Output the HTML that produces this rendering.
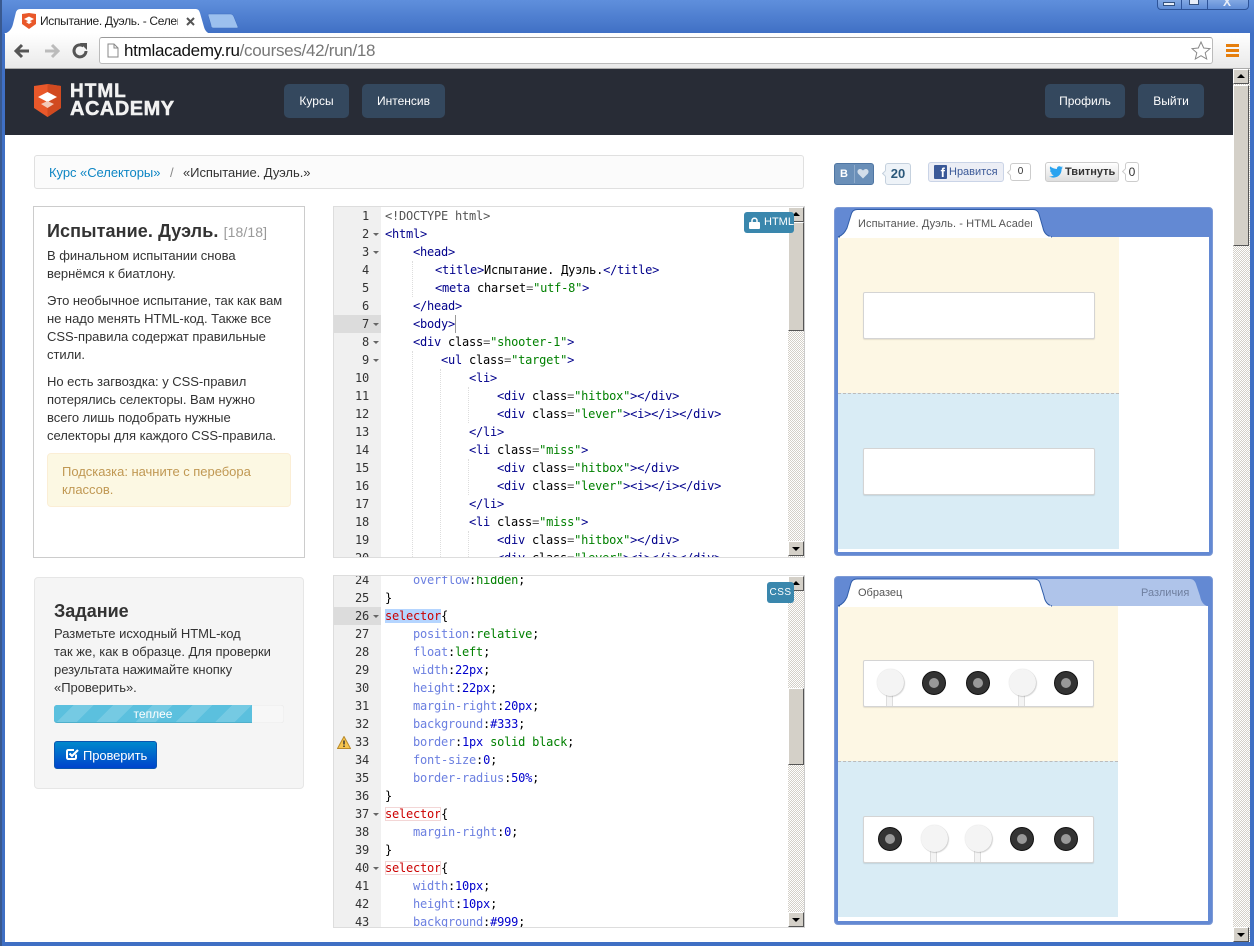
<!DOCTYPE html>
<html><head><meta charset="utf-8"><style>
*{box-sizing:border-box}
html,body{margin:0;padding:0;width:1254px;height:946px;overflow:hidden;background:#fff;font-family:"Liberation Sans",sans-serif;color:#333}
.a{position:absolute}
.t{position:absolute;white-space:nowrap}
.navb{position:absolute;top:84px;height:34px;background:#34485e;border-radius:5px;color:#fff;font-size:12px;line-height:34px;text-align:center}
.p{position:absolute;font-size:13px;line-height:18px;left:47px;color:#333;white-space:nowrap;letter-spacing:-.03px}
.ed{position:absolute;left:333px;width:472px;background:#fff;overflow:hidden;border:1px solid #ddd;border-right:1px solid #ccc}
.gut{position:absolute;left:0;top:0;width:47px;height:100%;background:#f0f0f0}
.n{position:absolute;left:0;width:35px;height:18px;text-align:right;font:12px/18px "DejaVu Sans Mono",monospace;color:#333;letter-spacing:-.22px}
.n.act{width:47px;padding-right:12px;background:#dcdcdc}
.fd{position:absolute;left:39px;width:0;height:0;border:3px solid transparent;border-top:3px solid #666;border-bottom:0}
.l{position:absolute;white-space:pre;height:18px;font:12px/18px "DejaVu Sans Mono",monospace;letter-spacing:-.22px;color:#000}
.g{color:#555}.b{color:#00008b}.s{color:#008000}.c{color:#6b7fe0}.v{color:#008000}.u{color:#0000cd}.r{color:#c00}
.sel{background:#b5d5ff}.bx{outline:1px solid #f3d6d6;outline-offset:-1px}
.dt{position:absolute;border-left:1px dotted #ddd}
.sb{position:absolute;width:17px;background-color:#e8e6e1;background-image:linear-gradient(45deg,#d4d0c8 25%,transparent 25%,transparent 75%,#d4d0c8 75%),linear-gradient(45deg,#d4d0c8 25%,#fff 25%,#fff 75%,#d4d0c8 75%);background-size:2px 2px;background-position:0 0,1px 1px}
.sbb{position:absolute;left:0;width:16px;height:15px;background:#d4d0c8;border:1px solid;border-color:#fff #555 #555 #fff}
.sbt{position:absolute;left:0;width:16px;background:#d4d0c8;border:1px solid;border-color:#fff #555 #555 #fff}
.up{position:absolute;left:3px;top:4px;width:0;height:0;border:4px solid transparent;border-bottom:4px solid #000;border-top:0}
.dn{position:absolute;left:3px;top:5px;width:0;height:0;border:4px solid transparent;border-top:4px solid #000;border-bottom:0}
.badge{position:absolute;background:#3a87ad;color:#fff;border-radius:3px;font-size:10px;text-align:center}
.pv{position:absolute;left:834px;width:379px;background:#6389d3;border-radius:4px;border:1px solid #7d9ad6}
.box{position:absolute;background:#fff;border-radius:2px;border:1px solid rgba(0,0,0,.17);box-shadow:0 1px 1px rgba(0,0,0,.1)}
.box>*{margin:-1px 0 0 -1px}
.dk{position:absolute;width:24px;height:24px;border-radius:50%;background:#333;border:1px solid #111}
.dk:after{content:"";position:absolute;left:6px;top:6px;width:10px;height:10px;border-radius:50%;background:#999}
.lt{position:absolute;width:27px;height:27px;border-radius:50%;background:#f4f4f4;box-shadow:1px 1px 1px rgba(0,0,0,.15),0 0 1px rgba(0,0,0,.2)}
.st{position:absolute;width:7px;background:#f4f4f4;border:1px solid #ddd;border-top:0;border-bottom:0}
.soc{position:absolute;border-radius:3px;font-size:11px;white-space:nowrap}
.nt{position:absolute;width:5px;height:5px;background:#fff;transform:rotate(45deg);border-left:1px solid #ccc;border-bottom:1px solid #ccc}
</style></head><body>

<!-- window chrome -->
<div class="a" style="left:0;top:0;width:1254px;height:946px;background:linear-gradient(#5f8fdc,#3f6fc4 34px,#3f6fc4)"></div>
<div class="a" style="left:0;top:0;width:2px;height:946px;background:#39598f"></div>
<div class="a" style="left:1157px;top:-4px;width:92px;height:14px;border:1px solid #2d5398;border-radius:4px;background:linear-gradient(#8fb2e8,#5f8cd6)"></div>
<div class="a" style="left:1181px;top:0;width:1px;height:9px;background:#2d5398"></div>
<div class="a" style="left:1207px;top:0;width:1px;height:9px;background:#2d5398"></div>
<div class="a" style="left:1163px;top:2px;width:12px;height:4px;background:#e8eef8;border:1px solid #33517f"></div>
<div class="a" style="left:1189px;top:-1px;width:10px;height:6px;background:#e8eef8;border:1px solid #33517f"></div>
<div class="t" style="left:1223px;top:-5px;font:bold 12px 'Liberation Sans';color:#e8eef8">X</div>

<!-- tab strip -->
<svg class="a" style="left:0;top:0" width="260" height="36">
<path d="M208 15C208 14 209 14 210 14H230C232 14 233 15 234 17L238 27C238 28 237 28 236 28H214C212 28 211 27 211 25Z" fill="#9cc0ee" stroke="#3d6cbf" stroke-width=".5"/>
<path d="M4 34C10 32 12 28 13 24L16 12C17 10 18 9 21 9H195C198 9 199 10 200 13L204 27C205 30 206 32 210 34Z" fill="#fff"/>
</svg>
<svg class="a" style="left:22px;top:13px" width="14" height="16" viewBox="0 0 14 16"><path d="M0 1L7 0L14 1V11L7 16L0 11Z" fill="#e9582a"/><path d="M2 6L7 3.500L12 6L7 8.500Z M4 9L7 7.800L10 9L7 11Z" fill="#fff"/></svg>
<div class="t" style="left:40px;top:13px;width:138px;overflow:hidden;font-size:12px;line-height:16px;color:#222;letter-spacing:-.32px">Испытание. Дуэль. - Селек</div>
<svg class="a" style="left:186px;top:17px" width="9" height="9"><path d="M1 1L8 8M8 1L1 8" stroke="#555" stroke-width="2"/></svg>

<!-- toolbar -->
<div class="a" style="left:5px;top:33px;width:1245px;height:36px;background:linear-gradient(#fff,#e9e9e9);border-bottom:1px solid #aaa"></div>
<svg class="a" style="left:14px;top:42px" width="76" height="18" viewBox="0 0 76 18">
<path d="M2 9H15M8 3L2 9L8 15" fill="none" stroke="#555" stroke-width="3"/>
<path d="M31 9H44M38 3L44 9L38 15" fill="none" stroke="#bbb" stroke-width="3"/>
<path d="M72 9A6 6 0 1 1 69.500 4" fill="none" stroke="#555" stroke-width="3"/><path d="M66 1H73V8Z" fill="#555"/>
</svg>
<div class="a" style="left:99px;top:37px;width:1114px;height:27px;background:#fff;border:1px solid #bbb;border-top-color:#999;border-radius:3px"></div>
<svg class="a" style="left:107px;top:43px" width="12" height="15"><path d="M1 1H7L11 5V14H1Z" fill="#fff" stroke="#888"/><path d="M7 1V5H11" fill="none" stroke="#888"/></svg>
<div class="t" style="left:124px;top:41px;font-size:17px;line-height:20px;color:#111;letter-spacing:-.29px">htmlacademy.ru<span style="color:#777">/courses/42/run/18</span></div>
<svg class="a" style="left:1191px;top:41px" width="20" height="19"><path d="M10 1L12.700 7L19 7.600L14.200 11.800L15.700 18L10 14.700L4.300 18L5.800 11.800L1 7.600L7.300 7Z" fill="#fff" stroke="#888"/></svg>
<div class="a" style="left:1226px;top:44px;width:13px;height:3px;background:#e67e0c"></div>
<div class="a" style="left:1226px;top:49px;width:13px;height:3px;background:#e67e0c"></div>
<div class="a" style="left:1226px;top:54px;width:13px;height:3px;background:#e67e0c"></div>

<!-- page -->
<div class="a" style="left:5px;top:69px;width:1245px;height:873px;background:#fff"></div>
<div class="a" style="left:5px;top:69px;width:1228px;height:66px;background:#282c36"></div>
<svg class="a" style="left:34px;top:84px" width="27" height="33" viewBox="0 0 27 33"><path d="M0 2L13.500 0L27 2V24L13.500 33L0 24Z" fill="#e9582a"/><path d="M13.500 0L27 2V24L13.500 33Z" fill="#d14a20"/><path d="M4 13L13.500 8L23 13L13.500 18Z" fill="#fff"/><path d="M7 20L13.500 17L20 20L13.500 24Z" fill="#f3c9b8"/></svg>
<div class="t" style="left:70px;top:82px;font-weight:bold;font-size:19px;line-height:20px;color:#f2f2f2;letter-spacing:1px;-webkit-text-stroke:.5px #f2f2f2">HTML</div>
<div class="t" style="left:70px;top:99px;font-weight:bold;font-size:20px;line-height:20px;color:#f2f2f2;letter-spacing:.5px;-webkit-text-stroke:.5px #f2f2f2">ACADEMY</div>
<div class="navb" style="left:284px;width:65px">Курсы</div>
<div class="navb" style="left:362px;width:83px">Интенсив</div>
<div class="navb" style="left:1045px;width:80px">Профиль</div>
<div class="navb" style="left:1138px;width:66px">Выйти</div>

<!-- breadcrumb -->
<div class="a" style="left:34px;top:155px;width:770px;height:34px;background:#fbfbfb;border:1px solid #e0e0e0;border-radius:3px"></div>
<div class="t" style="left:49px;top:165px;font-size:13px;line-height:16px;color:#0e86c4;letter-spacing:-.05px">Курс «Селекторы»</div>
<div class="t" style="left:170px;top:165px;font-size:13px;line-height:16px;color:#888">/</div>
<div class="t" style="left:183px;top:165px;font-size:13px;line-height:16px;color:#333;letter-spacing:-.05px">«Испытание. Дуэль.»</div>

<!-- social -->
<div class="soc" style="left:834px;top:163px;width:40px;height:22px;background:#6a8fb8;border:1px solid #4f76a3;color:#fff;font-weight:bold;line-height:20px;padding-left:5px">В</div>
<div class="a" style="left:854px;top:165px;width:1px;height:18px;background:#8eabcb"></div>
<svg class="a" style="left:857px;top:168px" width="12" height="11"><path d="M6 10.500L1 5.500C-1 2 3-1 6 2.500C9-1 13 2 11 5.500Z" fill="#d3deea"/></svg>
<div class="soc" style="left:885px;top:163px;width:26px;height:22px;background:#eef3f8;border:1px solid #c5d1de;color:#2b587a;font-weight:bold;font-size:13px;line-height:20px;text-align:center">20</div>
<div class="nt" style="left:883px;top:171px;background:#eef3f8;border-color:#c5d1de"></div>
<div class="soc" style="left:928px;top:162px;width:76px;height:20px;background:#eceef5;border:1px solid #cad4e7;color:#3b5998;line-height:18px;padding-left:20px">Нравится</div>
<div class="a" style="left:934px;top:165px;width:13px;height:14px;background:#3b5998;border-radius:1px;color:#fff;font:bold 13px/16px 'Liberation Sans';text-align:right;padding-right:2px;overflow:hidden">f</div>
<div class="soc" style="left:1010px;top:163px;width:21px;height:18px;background:#fff;border:1px solid #ccc;color:#333;font-size:10px;line-height:16px;text-align:center">0</div>
<div class="nt" style="left:1008px;top:170px"></div>
<div class="soc" style="left:1045px;top:162px;width:74px;height:20px;background:linear-gradient(#fff,#dedede);border:1px solid #ccc;color:#333;font-weight:bold;line-height:18px;padding-left:19px">Твитнуть</div>
<svg class="a" style="left:1049px;top:166px" width="14" height="12" viewBox="0 0 14 12"><path d="M14 1.500L12.400 2C13 1.500 13.300 1 13.500.3L12 1C10.500-.5 7.500.5 8 3C5.500 3 3 2 1.300.4C.4 2 1 3.600 2.200 4.500L1 4.200C1 5.700 2 6.800 3.300 7.100H2.100C2.500 8.300 3.500 9 4.800 9.100C3.500 10.200 1.800 10.600 0 10.400C5.500 13.500 12.800 10.500 12.600 3Z" fill="#2aa3ef"/></svg>
<div class="soc" style="left:1125px;top:162px;width:14px;height:20px;background:#fff;border:1px solid #ccc;color:#333;font-size:12px;line-height:18px;text-align:center">0</div>
<div class="nt" style="left:1123px;top:169px"></div>

<!-- description panel -->
<div class="a" style="left:33px;top:206px;width:272px;height:352px;background:#fff;border:1px solid #ccc"></div>
<div class="t" style="left:47px;top:220px;font-size:18px;line-height:22px;font-weight:bold;color:#333;letter-spacing:.1px">Испытание. Дуэль. <span style="font-weight:normal;font-size:14px;color:#999">[18/18]</span></div>
<div class="p" style="top:247px">В финальном испытании снова<br>вернёмся к биатлону.</div>
<div class="p" style="top:292px">Это необычное испытание, так как вам<br>не надо менять HTML-код. Также все<br>CSS-правила содержат правильные<br>стили.</div>
<div class="p" style="top:373px">Но есть загвоздка: у CSS-правил<br>потерялись селекторы. Вам нужно<br>всего лишь подобрать нужные<br>селекторы для каждого CSS-правила.</div>
<div class="a" style="left:47px;top:453px;width:244px;height:54px;background:#fcf8e3;border:1px solid #fbeed5;border-radius:4px"></div>
<div class="p" style="left:62px;top:463px;color:#c09853">Подсказка: начните с перебора<br>классов.</div>

<!-- task panel -->
<div class="a" style="left:34px;top:577px;width:270px;height:212px;background:#f5f5f5;border:1px solid #e6e6e6;border-radius:4px"></div>
<div class="t" style="left:54px;top:601px;font-size:18px;line-height:20px;font-weight:bold;color:#333">Задание</div>
<div class="p" style="left:54px;top:625px">Разметьте исходный HTML-код<br>так же, как в образце. Для проверки<br>результата нажимайте кнопку<br>«Проверить».</div>
<div class="a" style="left:54px;top:705px;width:230px;height:18px;background:#f7f7f7;border-radius:3px;box-shadow:inset 0 0 1px rgba(0,0,0,.15)"></div>
<div class="a" style="left:54px;top:705px;width:198px;height:18px;border-radius:3px 0 0 3px;background-color:#5bc0de;background-image:repeating-linear-gradient(135deg,#5bc0de 0,#5bc0de 14px,#75cae3 14px,#75cae3 28px);border-bottom:1px solid #4fb0cc"></div>
<div class="t" style="left:54px;top:705px;width:198px;text-align:center;font-size:12px;line-height:18px;color:#fff">теплее</div>
<div class="a" style="left:54px;top:741px;width:103px;height:28px;border-radius:3px;background:linear-gradient(#0088cc,#0044cc);border:1px solid #0a56b0"></div>
<svg class="a" style="left:66px;top:748px" width="13" height="13"><path d="M10 6.500V9.500C10 10.500 9.500 11 8.500 11H2.500C1.500 11 1 10.500 1 9.500V3.500C1 2.500 1.500 2 2.500 2H8" fill="none" stroke="#fff" stroke-width="2"/><path d="M3.500 5.500L6 8L12 2" fill="none" stroke="#fff" stroke-width="2.200"/></svg>
<div class="t" style="left:83px;top:747px;font-size:13px;line-height:17px;color:#fff;letter-spacing:-.1px">Проверить</div>

<!-- HTML editor -->
<div class="ed" style="top:206px;height:352px">
<div class="gut"></div>
<div class="n" style="top:0">1</div><div class="n" style="top:18px">2</div><div class="n" style="top:36px">3</div><div class="n" style="top:54px">4</div><div class="n" style="top:72px">5</div><div class="n" style="top:90px">6</div><div class="n act" style="top:108px">7</div><div class="n" style="top:126px">8</div><div class="n" style="top:144px">9</div><div class="n" style="top:162px">10</div><div class="n" style="top:180px">11</div><div class="n" style="top:198px">12</div><div class="n" style="top:216px">13</div><div class="n" style="top:234px">14</div><div class="n" style="top:252px">15</div><div class="n" style="top:270px">16</div><div class="n" style="top:288px">17</div><div class="n" style="top:306px">18</div><div class="n" style="top:324px">19</div><div class="n" style="top:342px">20</div>
<div class="fd" style="top:26px"></div><div class="fd" style="top:44px"></div><div class="fd" style="top:116px"></div><div class="fd" style="top:134px"></div><div class="fd" style="top:152px"></div>
<div class="dt" style="left:78px;top:54px;height:36px"></div>
<div class="dt" style="left:78px;top:144px;height:208px"></div>
<div class="dt" style="left:106px;top:162px;height:190px"></div>
<div class="dt" style="left:134px;top:180px;height:36px"></div>
<div class="dt" style="left:134px;top:252px;height:36px"></div>
<div class="dt" style="left:134px;top:324px;height:28px"></div>
<div class="a" style="left:121px;top:108px;width:1px;height:18px;background:#999"></div>
<div class="l g" style="left:51px;top:0">&lt;!DOCTYPE html&gt;</div>
<div class="l b" style="left:51px;top:18px">&lt;html&gt;</div>
<div class="l b" style="left:79px;top:36px">&lt;head&gt;</div>
<div class="l b" style="left:101px;top:54px">&lt;title&gt;<span style="color:#000">Испытание. Дуэль.</span>&lt;/title&gt;</div>
<div class="l b" style="left:101px;top:72px">&lt;meta <span style="color:#000">charset</span><span class="g">=</span><span class="s">"utf-8"</span>&gt;</div>
<div class="l b" style="left:79px;top:90px">&lt;/head&gt;</div>
<div class="l b" style="left:79px;top:108px">&lt;body&gt;</div>
<div class="l b" style="left:79px;top:126px">&lt;div <span style="color:#000">class</span><span class="g">=</span><span class="s">"shooter-1"</span>&gt;</div>
<div class="l b" style="left:107px;top:144px">&lt;ul <span style="color:#000">class</span><span class="g">=</span><span class="s">"target"</span>&gt;</div>
<div class="l b" style="left:135px;top:162px">&lt;li&gt;</div>
<div class="l b" style="left:163px;top:180px">&lt;div <span style="color:#000">class</span><span class="g">=</span><span class="s">"hitbox"</span>&gt;&lt;/div&gt;</div>
<div class="l b" style="left:163px;top:198px">&lt;div <span style="color:#000">class</span><span class="g">=</span><span class="s">"lever"</span>&gt;&lt;i&gt;&lt;/i&gt;&lt;/div&gt;</div>
<div class="l b" style="left:135px;top:216px">&lt;/li&gt;</div>
<div class="l b" style="left:135px;top:234px">&lt;li <span style="color:#000">class</span><span class="g">=</span><span class="s">"miss"</span>&gt;</div>
<div class="l b" style="left:163px;top:252px">&lt;div <span style="color:#000">class</span><span class="g">=</span><span class="s">"hitbox"</span>&gt;&lt;/div&gt;</div>
<div class="l b" style="left:163px;top:270px">&lt;div <span style="color:#000">class</span><span class="g">=</span><span class="s">"lever"</span>&gt;&lt;i&gt;&lt;/i&gt;&lt;/div&gt;</div>
<div class="l b" style="left:135px;top:288px">&lt;/li&gt;</div>
<div class="l b" style="left:135px;top:306px">&lt;li <span style="color:#000">class</span><span class="g">=</span><span class="s">"miss"</span>&gt;</div>
<div class="l b" style="left:163px;top:324px">&lt;div <span style="color:#000">class</span><span class="g">=</span><span class="s">"hitbox"</span>&gt;&lt;/div&gt;</div>
<div class="l b" style="left:163px;top:342px">&lt;div <span style="color:#000">class</span><span class="g">=</span><span class="s">"lever"</span>&gt;&lt;i&gt;&lt;/i&gt;&lt;/div&gt;</div>
<div class="sb" style="left:454px;top:0;height:350px"><div class="sbb" style="top:0"><div class="up"></div></div><div class="sbt" style="top:15px;height:109px"></div><div class="sbb" style="top:334px"><div class="dn"></div></div></div>
</div>
<div class="badge" style="left:744px;top:212px;width:50px;height:21px;line-height:21px;font-size:11px;text-align:left;padding-left:20px">HTML</div>
<svg class="a" style="left:749px;top:217px" width="11" height="12"><path d="M3 5V3.500C3 .5 8 .5 8 3.500V5" fill="none" stroke="#fff" stroke-width="1.500"/><rect x="0" y="5" width="11" height="7" rx="1" fill="#fff"/></svg>

<!-- CSS editor -->
<div class="ed" style="top:575px;height:353px">
<div class="gut"></div>
<div class="n" style="top:-5px">24</div><div class="n" style="top:13px">25</div><div class="n act" style="top:31px">26</div><div class="n" style="top:49px">27</div><div class="n" style="top:67px">28</div><div class="n" style="top:85px">29</div><div class="n" style="top:103px">30</div><div class="n" style="top:121px">31</div><div class="n" style="top:139px">32</div><div class="n" style="top:157px">33</div><div class="n" style="top:175px">34</div><div class="n" style="top:193px">35</div><div class="n" style="top:211px">36</div><div class="n" style="top:229px">37</div><div class="n" style="top:247px">38</div><div class="n" style="top:265px">39</div><div class="n" style="top:283px">40</div><div class="n" style="top:301px">41</div><div class="n" style="top:319px">42</div><div class="n" style="top:337px">43</div>
<div class="fd" style="top:39px"></div><div class="fd" style="top:237px"></div><div class="fd" style="top:291px"></div>
<svg class="a" style="left:3px;top:160px" width="14" height="13"><path d="M7 .5L13.500 12.500H.5Z" fill="#f6c44d" stroke="#b98a2a"/><path d="M7 4.500V8.500M7 9.500V11" stroke="#333" stroke-width="1.500"/></svg>
<div class="l" style="left:79px;top:-5px"><span class="c">overflow</span>:<span class="v">hidden</span>;</div>
<div class="l" style="left:51px;top:13px">}</div>
<div class="l" style="left:51px;top:31px"><span class="r sel">selector</span>{</div>
<div class="l" style="left:79px;top:49px"><span class="c">position</span>:<span class="v">relative</span>;</div>
<div class="l" style="left:79px;top:67px"><span class="c">float</span>:<span class="v">left</span>;</div>
<div class="l" style="left:79px;top:85px"><span class="c">width</span>:<span class="u">22px</span>;</div>
<div class="l" style="left:79px;top:103px"><span class="c">height</span>:<span class="u">22px</span>;</div>
<div class="l" style="left:79px;top:121px"><span class="c">margin-right</span>:<span class="u">20px</span>;</div>
<div class="l" style="left:79px;top:139px"><span class="c">background</span>:<span class="u">#333</span>;</div>
<div class="l" style="left:79px;top:157px"><span class="c">border</span>:<span class="u">1px</span> <span class="v">solid black</span>;</div>
<div class="l" style="left:79px;top:175px"><span class="c">font-size</span>:<span class="u">0</span>;</div>
<div class="l" style="left:79px;top:193px"><span class="c">border-radius</span>:<span class="u">50%</span>;</div>
<div class="l" style="left:51px;top:211px">}</div>
<div class="l" style="left:51px;top:229px"><span class="r bx">selector</span>{</div>
<div class="l" style="left:79px;top:247px"><span class="c">margin-right</span>:<span class="u">0</span>;</div>
<div class="l" style="left:51px;top:265px">}</div>
<div class="l" style="left:51px;top:283px"><span class="r bx">selector</span>{</div>
<div class="l" style="left:79px;top:301px"><span class="c">width</span>:<span class="u">10px</span>;</div>
<div class="l" style="left:79px;top:319px"><span class="c">height</span>:<span class="u">10px</span>;</div>
<div class="l" style="left:79px;top:337px"><span class="c">background</span>:<span class="u">#999</span>;</div>
<div class="sb" style="left:454px;top:0;height:351px"><div class="sbb" style="top:0"><div class="up"></div></div><div class="sbt" style="top:112px;height:77px"></div><div class="sbb" style="top:336px"><div class="dn"></div></div></div>
</div>
<div class="badge" style="left:767px;top:582px;width:27px;height:21px;line-height:21px;letter-spacing:.5px">CSS</div>

<!-- preview 1 -->
<div class="pv" style="top:207px;height:349px"></div>
<div class="a" style="left:838px;top:237px;width:371px;height:315px;background:#fff"></div>
<div class="a" style="left:838px;top:237px;width:281px;height:156px;background:#fdf7e4"></div>
<div class="a" style="left:838px;top:393px;width:281px;height:156px;background:#d9ecf5;border-top:1px dashed #bbb"></div>
<div class="box" style="left:863px;top:292px;width:232px;height:47px"></div>
<div class="box" style="left:863px;top:448px;width:232px;height:47px"></div>
<svg class="a" style="left:835px;top:208px" width="225" height="30"><path d="M3 29C8 27 10 24 12 20L16 7C17 3 19 1.500 22 1.500H198C201 1.500 203 3 204 6L208 20C209 25 212 28 217 29Z" fill="#fff" stroke="#2f5ca8"/><path d="M5 29.500H216" stroke="#fff" stroke-width="2"/></svg>
<div class="t" style="left:858px;top:217px;width:174px;overflow:hidden;font-size:11px;line-height:15px;color:#555;letter-spacing:.1px">Испытание. Дуэль. - HTML Academy</div>

<!-- preview 2 -->
<div class="pv" style="top:576px;height:349px"></div>
<div class="a" style="left:838px;top:606px;width:370px;height:315px;background:#fff"></div>
<div class="a" style="left:838px;top:606px;width:280px;height:156px;background:#fdf7e4"></div>
<div class="a" style="left:838px;top:761px;width:280px;height:156px;background:#d9ecf5;border-top:1px dashed #bbb"></div>
<svg class="a" style="left:835px;top:578px" width="375" height="29"><path d="M180 28V1H355C358 1 360 3 361 6L365 18C366 24 369 27 372 28Z" fill="#afc4ea"/><path d="M3 28C8 26 10 23 12 19L16 5C17 2 19 1 22 1H199C202 1 204 2 205 5L209 18C210 24 213 27 217 28Z" fill="#fff" stroke="#2f5ca8"/><path d="M5 28.500H216" stroke="#fff" stroke-width="2"/></svg>
<div class="t" style="left:858px;top:586px;font-size:11px;line-height:15px;color:#555">Образец</div>
<div class="t" style="left:1141px;top:586px;font-size:11px;line-height:15px;color:#6f7f9f">Различия</div>
<div class="box" style="left:863px;top:660px;width:231px;height:47px;overflow:hidden">
<div class="st" style="left:23px;top:30px;height:17px"></div><div class="lt" style="left:14px;top:9px"></div>
<div class="dk" style="left:59px;top:11px"></div><div class="dk" style="left:103px;top:11px"></div>
<div class="st" style="left:155px;top:30px;height:17px"></div><div class="lt" style="left:146px;top:9px"></div>
<div class="dk" style="left:191px;top:11px"></div>
</div>
<div class="box" style="left:863px;top:816px;width:231px;height:47px;overflow:hidden">
<div class="dk" style="left:15px;top:11px"></div>
<div class="st" style="left:67px;top:30px;height:17px"></div><div class="lt" style="left:58px;top:9px"></div>
<div class="st" style="left:111px;top:30px;height:17px"></div><div class="lt" style="left:102px;top:9px"></div>
<div class="dk" style="left:147px;top:11px"></div><div class="dk" style="left:191px;top:11px"></div>
</div>

<!-- page scrollbar -->
<div class="sb" style="left:1233px;top:69px;height:873px"><div class="sbb" style="top:0"><div class="up"></div></div><div class="sbt" style="top:16px;height:161px"></div><div class="sbb" style="top:858px"><div class="dn"></div></div></div>
</body></html>
